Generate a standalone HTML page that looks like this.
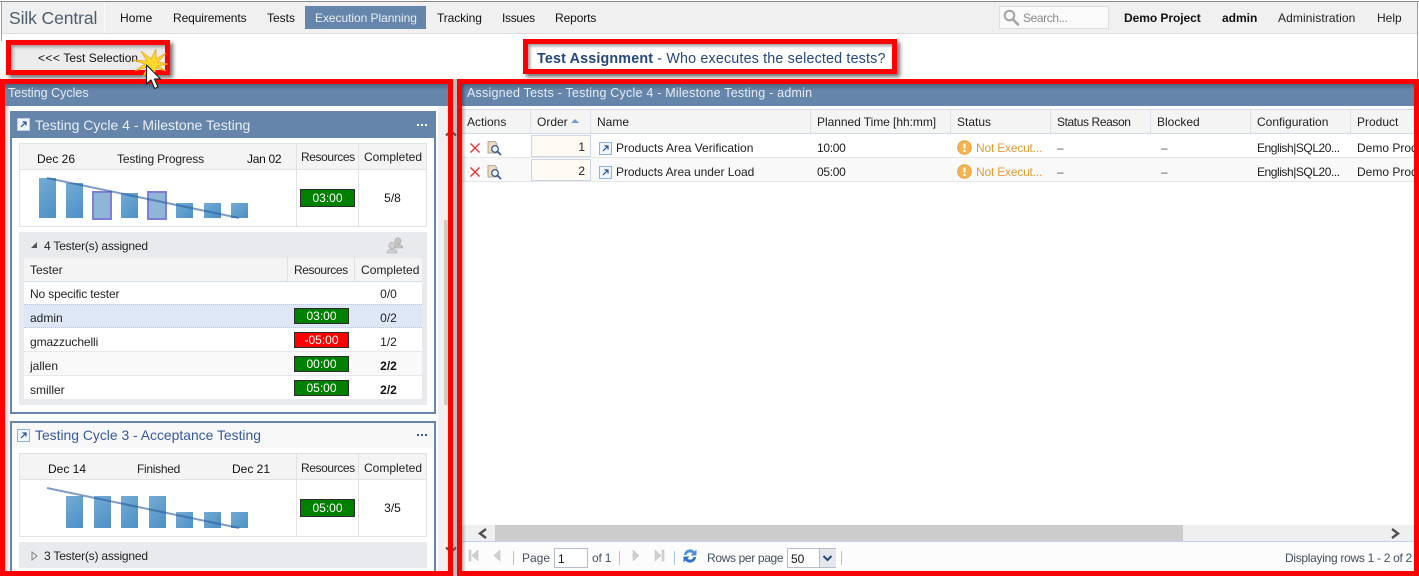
<!DOCTYPE html>
<html><head><meta charset="utf-8"><title>Silk Central</title>
<style>
html,body{margin:0;padding:0;background:#fff}
#p{position:relative;width:1419px;height:576px;overflow:hidden;background:#fff;font-family:"Liberation Sans",sans-serif;font-size:12px;color:#1e1e1e}
#p div,#p svg{position:absolute}
.t{white-space:nowrap;height:16px;line-height:16px;letter-spacing:0}
.c{text-align:center}
.r{position:absolute;box-sizing:border-box;border:5px solid #f00}
.bar{background:linear-gradient(135deg,#74abd5,#4b90c4)}
.pb{background:#8fb6d6;border:2px solid #7f7fd8;box-sizing:border-box}
.g{background:#008000;border:1px solid #2b2b2b;box-sizing:border-box;color:#fff;text-align:center;line-height:14px}
.red{background:#f00}
.l{height:1px}
</style></head><body><div id="p">

<!-- top bar -->
<div style="left:1px;top:1px;width:1416px;height:32px;background:#f0f0f0"></div>
<div style="left:0;top:1px;width:1419px;height:1px;background:#8a8a8a"></div>
<div style="left:1px;top:1px;width:1px;height:40px;background:#a0a0a0"></div>
<div style="left:1417px;top:1px;width:1px;height:78px;background:#a0a0a0"></div>
<div style="left:2px;top:33px;width:1415px;height:1px;background:#dcdcdc"></div>
<div style="left:104px;top:2px;width:1px;height:31px;background:#fafafa"></div>
<div class="t" style="left:9px;top:6px;font-size:17.500px;height:24px;line-height:24px;color:#4d5d6d;letter-spacing:-.1px">Silk Central</div>
<div class="t" style="left:120px;top:10px;color:#111;letter-spacing:.1px">Home</div>
<div class="t" style="left:173px;top:10px;color:#111;letter-spacing:-.1px">Requirements</div>
<div class="t" style="left:267px;top:10px;color:#111">Tests</div>
<div style="left:305px;top:6px;width:121px;height:23px;background:#6685aa"></div>
<div class="t" style="left:315px;top:10px;color:#e8eef5;letter-spacing:-.05px">Execution Planning</div>
<div class="t" style="left:437px;top:10px;color:#111;letter-spacing:-.1px">Tracking</div>
<div class="t" style="left:502px;top:10px;color:#111;letter-spacing:-.3px">Issues</div>
<div class="t" style="left:555px;top:10px;color:#111;letter-spacing:-.1px">Reports</div>
<div style="left:999px;top:6px;width:110px;height:23px;box-sizing:border-box;background:#fafafa;border:1px solid #dcdcdc"></div>
<svg style="left:1003px;top:9px" width="17" height="18" viewBox="0 0 17 18"><circle cx="6.5" cy="6.5" r="4.8" fill="none" stroke="#a4a4a4" stroke-width="2"/><path d="M10 10.500 L15 15.500" stroke="#a4a4a4" stroke-width="2.600" stroke-linecap="round"/></svg>
<div class="t" style="left:1023px;top:10px;color:#8a8a8a;letter-spacing:-.4px">Search...</div>
<div class="t" style="left:1124px;top:10px;font-weight:bold;color:#111;letter-spacing:-.05px">Demo Project</div>
<div class="t" style="left:1222px;top:10px;font-weight:bold;color:#111">admin</div>
<div class="t" style="left:1278px;top:10px;color:#222;letter-spacing:.1px">Administration</div>
<div class="t" style="left:1377px;top:10px;color:#222">Help</div>

<!-- test selection -->
<div style="left:11px;top:45px;width:154px;height:25px;background:#ececec;box-shadow:inset 2px 2px 3px #999"></div>
<div class="t" style="left:38px;top:50px;color:#111"><span style="letter-spacing:.4px">&lt;&lt;&lt;</span> Test Selection</div>
<div class="r" style="left:6px;top:40px;width:164px;height:35px;box-shadow:3px 3px 4px rgba(0,0,0,.55)"></div>

<!-- test assignment -->
<div class="t" style="left:537px;top:50px;font-size:14.300px;height:18px;line-height:18px;color:#24477f;letter-spacing:.17px"><b>Test Assignment</b> - Who executes the selected tests?</div>
<div class="r" style="left:523px;top:39px;width:374px;height:35px;box-shadow:3px 3px 4px rgba(0,0,0,.55),inset 2px 2px 3px rgba(0,0,0,.4)"></div>

<!-- left panel -->
<div style="left:5px;top:84px;width:443px;height:22px;background:linear-gradient(#4c6583,#6685aa 6px)"></div>
<div class="t" style="left:8px;top:85px;color:#e6ecf3;font-size:12.500px">Testing Cycles</div>
<div style="left:5px;top:106px;width:5px;height:465px;background:linear-gradient(90deg,#c8c8c8,#fff)"></div>
<div style="left:438px;top:106px;width:10px;height:465px;background:#f0f0f0"></div>
<div style="left:444px;top:220px;width:4px;height:185px;background:#ccc"></div>

<!-- cycle 4 -->
<div style="left:10px;top:111px;width:426px;height:303px;box-sizing:border-box;border:2px solid #6685aa;background:#fff"></div>
<div style="left:10px;top:111px;width:426px;height:27px;background:#6685aa"></div>
<svg style="left:17px;top:118px" width="13" height="13" viewBox="0 0 13 13"><rect x=".5" y=".5" width="12" height="12" fill="#f0f6fd" stroke="#b5cfe8"/><path d="M4 9 L9 4 M5.500 4 H9 V7.500" stroke="#23518f" stroke-width="1.200" fill="none"/></svg>
<div class="t" style="left:35px;top:116px;font-size:14px;height:18px;line-height:18px;color:#e8eef5">Testing Cycle 4 - Milestone Testing</div>
<svg style="left:417px;top:124px" width="11" height="3"><rect x="0" y="0" width="2" height="2" fill="#fff"/><rect x="4" y="0" width="2" height="2" fill="#fff"/><rect x="8" y="0" width="2" height="2" fill="#fff"/></svg>

<div style="left:19px;top:143px;width:408px;height:84px;box-sizing:border-box;border:1px solid #e2e2e2;background:#fff"></div>
<div style="left:20px;top:144px;width:406px;height:25px;background:#f4f4f4"></div>
<div class="l" style="left:20px;top:169px;width:406px;background:#e2e2e2"></div>
<div style="left:296px;top:144px;width:1px;height:82px;background:#e2e2e2"></div>
<div style="left:358px;top:144px;width:1px;height:82px;background:#e2e2e2"></div>
<div class="t" style="left:37px;top:151px;color:#111">Dec 26</div>
<div class="t" style="left:117px;top:151px;color:#222;letter-spacing:-.15px">Testing Progress</div>
<div class="t" style="left:247px;top:151px;color:#111;letter-spacing:-.3px">Jan 02</div>
<div class="t" style="left:301px;top:149px;color:#222;letter-spacing:-.4px">Resources</div>
<div class="t" style="left:364px;top:149px;color:#222">Completed</div>
<div class="bar" style="left:39px;top:178px;width:17px;height:40px"></div>
<div class="bar" style="left:66px;top:183px;width:17px;height:35px"></div>
<div class="pb" style="left:92px;top:191px;width:20px;height:29px"></div>
<div class="bar" style="left:121px;top:193px;width:17px;height:25px"></div>
<div class="pb" style="left:147px;top:191px;width:20px;height:29px"></div>
<div class="bar" style="left:176px;top:203px;width:17px;height:15px"></div>
<div class="bar" style="left:204px;top:203px;width:17px;height:15px"></div>
<div class="bar" style="left:231px;top:203px;width:17px;height:15px"></div>
<svg style="left:0;top:170px" width="260" height="60"><path d="M47 8 L239 48" stroke="#2c5a9c" stroke-opacity=".6" stroke-width="2"/></svg>
<div class="g" style="left:300px;top:189px;width:55px;height:18px;line-height:16px">03:00</div>
<div class="t c" style="left:359px;top:190px;width:67px;color:#111">5/8</div>

<div style="left:19px;top:232px;width:408px;height:173px;background:#e9eaee"></div>
<svg style="left:30px;top:241px" width="9" height="9"><path d="M1 7 H7 V1 Z" fill="#555"/></svg>
<div class="t" style="left:44px;top:238px;color:#222;letter-spacing:-.2px">4 Tester(s) assigned</div>
<svg style="left:386px;top:236px" width="18" height="18" viewBox="0 0 18 18"><g fill="#c4c4c4" stroke="#aaa" stroke-width=".6"><circle cx="12" cy="5" r="3.200"/><path d="M7 12 Q7 8.500 12 8.500 Q17 8.500 17 12 Z"/><circle cx="6" cy="9.500" r="3.200" fill="#d0d0d0"/><path d="M1 17 Q1 13 6 13 Q11 13 11 17 Z" fill="#d0d0d0"/></g></svg>
<div style="left:24px;top:258px;width:398px;height:141px;background:#fff"></div>
<div style="left:24px;top:258px;width:398px;height:23px;background:#f4f4f4"></div>
<div class="l" style="left:24px;top:281px;width:398px;background:#d3dceb"></div>
<div style="left:287px;top:258px;width:1px;height:23px;background:#e0e0e0"></div>
<div style="left:354px;top:258px;width:1px;height:23px;background:#e0e0e0"></div>
<div class="t" style="left:30px;top:262px;color:#222">Tester</div>
<div class="t" style="left:294px;top:262px;color:#222;letter-spacing:-.4px">Resources</div>
<div class="t" style="left:361px;top:262px;color:#222;letter-spacing:.05px">Completed</div>
<div style="left:24px;top:304px;width:398px;height:24px;box-sizing:border-box;background:#dde7f6;border-top:1px dotted #b8c8e4;border-bottom:1px dotted #b8c8e4"></div>
<div style="left:24px;top:352px;width:398px;height:24px;background:#f9f9f9"></div>
<div class="l" style="left:24px;top:351px;width:398px;background:#e8e8e8"></div>
<div class="l" style="left:24px;top:375px;width:398px;background:#e8e8e8"></div>
<div class="t" style="left:30px;top:286px;color:#222;letter-spacing:-.15px">No specific tester</div>
<div class="t" style="left:30px;top:310px;color:#222">admin</div>
<div class="t" style="left:30px;top:334px;color:#222;letter-spacing:-.1px">gmazzuchelli</div>
<div class="t" style="left:30px;top:358px;color:#222">jallen</div>
<div class="t" style="left:30px;top:382px;color:#222">smiller</div>
<div class="t c" style="left:355px;top:286px;width:67px;color:#222">0/0</div>
<div class="t c" style="left:355px;top:310px;width:67px;color:#222">0/2</div>
<div class="t c" style="left:355px;top:334px;width:67px;color:#222">1/2</div>
<div class="t c" style="left:355px;top:358px;width:67px;color:#111;font-weight:bold">2/2</div>
<div class="t c" style="left:355px;top:382px;width:67px;color:#111;font-weight:bold">2/2</div>
<div class="g" style="left:294px;top:308px;width:55px;height:16px">03:00</div>
<div class="g red" style="left:294px;top:332px;width:55px;height:16px">-05:00</div>
<div class="g" style="left:294px;top:356px;width:55px;height:16px">00:00</div>
<div class="g" style="left:294px;top:380px;width:55px;height:16px">05:00</div>

<!-- cycle 3 -->
<div style="left:10px;top:421px;width:426px;height:160px;box-sizing:border-box;border:2px solid #6685aa;background:#fff"></div>
<div style="left:12px;top:423px;width:422px;height:25px;background:#f8f8f8"></div>
<svg style="left:17px;top:429px" width="13" height="13" viewBox="0 0 13 13"><rect x=".5" y=".5" width="12" height="12" fill="#f0f6fd" stroke="#8db4dd"/><path d="M4 9 L9 4 M5.500 4 H9 V7.500" stroke="#23518f" stroke-width="1.200" fill="none"/></svg>
<div class="t" style="left:35px;top:426px;font-size:13.900px;height:18px;line-height:18px;color:#35599b">Testing Cycle 3 - Acceptance Testing</div>
<svg style="left:417px;top:434px" width="11" height="3"><rect x="0" y="0" width="2" height="2" fill="#35599b"/><rect x="4" y="0" width="2" height="2" fill="#35599b"/><rect x="8" y="0" width="2" height="2" fill="#35599b"/></svg>
<div style="left:19px;top:453px;width:408px;height:84px;box-sizing:border-box;border:1px solid #e2e2e2;background:#fff"></div>
<div style="left:20px;top:454px;width:406px;height:25px;background:#f4f4f4"></div>
<div class="l" style="left:20px;top:479px;width:406px;background:#e2e2e2"></div>
<div style="left:296px;top:454px;width:1px;height:82px;background:#e2e2e2"></div>
<div style="left:358px;top:454px;width:1px;height:82px;background:#e2e2e2"></div>
<div class="t" style="left:48px;top:461px;color:#111">Dec 14</div>
<div class="t" style="left:137px;top:461px;color:#222;letter-spacing:-.3px">Finished</div>
<div class="t" style="left:232px;top:461px;color:#111">Dec 21</div>
<div class="t" style="left:301px;top:460px;color:#222;letter-spacing:-.4px">Resources</div>
<div class="t" style="left:364px;top:460px;color:#222">Completed</div>
<div class="bar" style="left:66px;top:496px;width:17px;height:32px"></div>
<div class="bar" style="left:94px;top:496px;width:17px;height:32px"></div>
<div class="bar" style="left:121px;top:496px;width:17px;height:32px"></div>
<div class="bar" style="left:149px;top:496px;width:17px;height:32px"></div>
<div class="bar" style="left:176px;top:512px;width:17px;height:16px"></div>
<div class="bar" style="left:204px;top:512px;width:17px;height:16px"></div>
<div class="bar" style="left:231px;top:512px;width:17px;height:16px"></div>
<svg style="left:0;top:480px" width="260" height="60"><path d="M47 8 L239 48" stroke="#2c5a9c" stroke-opacity=".6" stroke-width="2"/></svg>
<div class="g" style="left:300px;top:499px;width:55px;height:18px;line-height:16px">05:00</div>
<div class="t c" style="left:359px;top:500px;width:67px;color:#111">3/5</div>
<div style="left:19px;top:542px;width:408px;height:26px;background:#e9eaee"></div>
<svg style="left:31px;top:551px" width="8" height="10"><path d="M1 1 L6 5 L1 9 Z" fill="none" stroke="#888"/></svg>
<div class="t" style="left:44px;top:548px;color:#222;letter-spacing:-.2px">3 Tester(s) assigned</div>

<!-- gap + scroll arrows -->
<div style="left:453px;top:79px;width:4px;height:497px;background:#bdbdbd"></div>
<svg style="left:445px;top:129px" width="12" height="8"><path d="M1 6.500 L6 2 L11 6.500" fill="none" stroke="#555" stroke-width="2.200"/></svg>
<svg style="left:445px;top:546px" width="12" height="8"><path d="M1 1.500 L6 6 L11 1.500" fill="none" stroke="#555" stroke-width="2.200"/></svg>

<!-- right panel -->
<div style="left:462px;top:84px;width:952px;height:22px;background:linear-gradient(#4c6583,#6685aa 6px)"></div>
<div class="t" style="left:467px;top:85px;color:#e6ecf3;font-size:12.500px;letter-spacing:.22px">Assigned Tests - Testing Cycle 4 - Milestone Testing - admin</div>
<div style="left:462px;top:109px;width:952px;height:25px;background:#f4f4f4;border-top:1px solid #d0daeb;border-bottom:1px solid #d0daeb;box-sizing:border-box"></div>
<div style="left:530px;top:110px;width:1px;height:23px;background:#dde1e8"></div>
<div style="left:590px;top:110px;width:1px;height:23px;background:#dde1e8"></div>
<div style="left:810px;top:110px;width:1px;height:23px;background:#dde1e8"></div>
<div style="left:950px;top:110px;width:1px;height:23px;background:#dde1e8"></div>
<div style="left:1050px;top:110px;width:1px;height:23px;background:#dde1e8"></div>
<div style="left:1150px;top:110px;width:1px;height:23px;background:#dde1e8"></div>
<div style="left:1250px;top:110px;width:1px;height:23px;background:#dde1e8"></div>
<div style="left:1350px;top:110px;width:1px;height:23px;background:#dde1e8"></div>
<div class="t" style="left:467px;top:114px;color:#222">Actions</div>
<div class="t" style="left:537px;top:114px;color:#222">Order</div>
<svg style="left:571px;top:118px" width="9" height="6"><path d="M0 5 L4 1 L8 5 Z" fill="#6d9ad2"/></svg>
<div class="t" style="left:597px;top:114px;color:#222">Name</div>
<div class="t" style="left:817px;top:114px;color:#222;letter-spacing:-.05px">Planned Time [hh:mm]</div>
<div class="t" style="left:957px;top:114px;color:#222">Status</div>
<div class="t" style="left:1057px;top:114px;color:#222;letter-spacing:-.4px">Status Reason</div>
<div class="t" style="left:1157px;top:114px;color:#222">Blocked</div>
<div class="t" style="left:1257px;top:114px;color:#222">Configuration</div>
<div class="t" style="left:1357px;top:114px;color:#222">Product</div>

<div style="left:462px;top:158px;width:952px;height:24px;background:#f9f9f9"></div>
<div class="l" style="left:462px;top:157px;width:952px;background:#e6e6e6"></div>
<div class="l" style="left:462px;top:181px;width:952px;background:#e6e6e6"></div>

<svg style="left:469px;top:142px" width="12" height="12"><path d="M1.500 1.500 L10.500 10.500 M10.500 1.500 L1.500 10.500" stroke="#e23a3a" stroke-width="1.500"/></svg>
<svg style="left:469px;top:166px" width="12" height="12"><path d="M1.500 1.500 L10.500 10.500 M10.500 1.500 L1.500 10.500" stroke="#e23a3a" stroke-width="1.500"/></svg>
<svg style="left:487px;top:141px" width="15" height="15" viewBox="0 0 15 15"><path d="M1 .5 H8 L10 3 V12 H1 Z" fill="#edd9c4" stroke="#a89682" stroke-width=".8"/><circle cx="8" cy="8" r="3.300" fill="#e8f2fb" stroke="#30517f" stroke-width="1.200"/><path d="M10.500 10.500 L14 14" stroke="#3050b0" stroke-width="1.600"/></svg>
<svg style="left:487px;top:165px" width="15" height="15" viewBox="0 0 15 15"><path d="M1 .5 H8 L10 3 V12 H1 Z" fill="#edd9c4" stroke="#a89682" stroke-width=".8"/><circle cx="8" cy="8" r="3.300" fill="#e8f2fb" stroke="#30517f" stroke-width="1.200"/><path d="M10.500 10.500 L14 14" stroke="#3050b0" stroke-width="1.600"/></svg>

<div style="left:531px;top:135px;width:60px;height:22px;box-sizing:border-box;background:#fdfaf3;border:1px solid #cdd6e6"></div>
<div style="left:531px;top:159px;width:60px;height:22px;box-sizing:border-box;background:#fdfaf3;border:1px solid #cdd6e6"></div>
<div class="t" style="left:531px;top:139px;width:54px;text-align:right;color:#222">1</div>
<div class="t" style="left:531px;top:163px;width:54px;text-align:right;color:#222">2</div>

<svg style="left:599px;top:142px" width="13" height="13" viewBox="0 0 13 13"><rect x=".5" y=".5" width="12" height="12" fill="#f0f6fd" stroke="#8db4dd"/><path d="M4 9 L9 4 M5.500 4 H9 V7.500" stroke="#23518f" stroke-width="1.200" fill="none"/></svg>
<svg style="left:599px;top:166px" width="13" height="13" viewBox="0 0 13 13"><rect x=".5" y=".5" width="12" height="12" fill="#f0f6fd" stroke="#8db4dd"/><path d="M4 9 L9 4 M5.500 4 H9 V7.500" stroke="#23518f" stroke-width="1.200" fill="none"/></svg>
<div class="t" style="left:616px;top:140px;color:#222">Products Area Verification</div>
<div class="t" style="left:616px;top:164px;color:#222;letter-spacing:-.05px">Products Area under Load</div>
<div class="t" style="left:817px;top:140px;color:#222;letter-spacing:-.3px">10:00</div>
<div class="t" style="left:817px;top:164px;color:#222;letter-spacing:-.3px">05:00</div>

<svg style="left:957px;top:140px" width="15" height="15"><circle cx="7.500" cy="7.500" r="6.800" fill="#f6b352" stroke="#e8a040"/><path d="M7.500 3.500 V8.500" stroke="#fff" stroke-width="2"/><circle cx="7.500" cy="11" r="1.200" fill="#fff"/></svg>
<svg style="left:957px;top:164px" width="15" height="15"><circle cx="7.500" cy="7.500" r="6.800" fill="#f6b352" stroke="#e8a040"/><path d="M7.500 3.500 V8.500" stroke="#fff" stroke-width="2"/><circle cx="7.500" cy="11" r="1.200" fill="#fff"/></svg>
<div class="t" style="left:976px;top:140px;color:#e39a35;letter-spacing:-.2px">Not Execut...</div>
<div class="t" style="left:976px;top:164px;color:#e39a35;letter-spacing:-.2px">Not Execut...</div>
<div class="t" style="left:1057px;top:140px;color:#555">–</div>
<div class="t" style="left:1057px;top:164px;color:#555">–</div>
<div class="t" style="left:1161px;top:140px;color:#555">–</div>
<div class="t" style="left:1161px;top:164px;color:#555">–</div>
<div class="t" style="left:1257px;top:140px;color:#222;letter-spacing:-.45px">English|SQL20...</div>
<div class="t" style="left:1257px;top:164px;color:#222;letter-spacing:-.45px">English|SQL20...</div>
<div class="t" style="left:1357px;top:140px;color:#222;width:57px;overflow:hidden">Demo Product</div>
<div class="t" style="left:1357px;top:164px;color:#222;width:57px;overflow:hidden">Demo Product</div>

<!-- h scrollbar -->
<div style="left:462px;top:525px;width:952px;height:16px;background:#efefef"></div>
<div style="left:495px;top:525px;width:688px;height:16px;background:#ccc"></div>
<svg style="left:477px;top:528px" width="12" height="11"><path d="M9 1 L3 5.500 L9 10" fill="none" stroke="#505050" stroke-width="2.400"/></svg>
<svg style="left:1389px;top:528px" width="12" height="11"><path d="M3 1 L9 5.500 L3 10" fill="none" stroke="#505050" stroke-width="2.400"/></svg>
<div class="l" style="left:462px;top:541px;width:952px;background:#c3d3ee"></div>
<div style="left:462px;top:542px;width:952px;height:29px;background:#fcfcfc"></div>

<!-- pager -->
<svg style="left:468px;top:549px" width="12" height="14"><rect x="1" y="1" width="2" height="11" fill="#d4d4d4" stroke="#bbb" stroke-width=".5"/><path d="M10 1 L4 6.500 L10 12 Z" fill="#d0d0d0" stroke="#bbb" stroke-width=".5"/></svg>
<svg style="left:493px;top:549px" width="9" height="14"><path d="M7 1 L1 6.500 L7 12 Z" fill="#d0d0d0" stroke="#bbb" stroke-width=".5"/></svg>
<div style="left:513px;top:551px;width:1px;height:14px;background:#a9c6e8"></div>
<div class="t" style="left:522px;top:550px;color:#44505e">Page</div>
<div style="left:554px;top:548px;width:34px;height:20px;box-sizing:border-box;background:#fff;border:1px solid #b5bccc"></div>
<div class="t" style="left:558px;top:551px;color:#111">1</div>
<div class="t" style="left:592px;top:550px;color:#44505e;letter-spacing:-.2px">of 1</div>
<div style="left:619px;top:551px;width:1px;height:14px;background:#a9c6e8"></div>
<svg style="left:631px;top:549px" width="9" height="14"><path d="M2 1 L8 6.500 L2 12 Z" fill="#d0d0d0" stroke="#bbb" stroke-width=".5"/></svg>
<svg style="left:653px;top:549px" width="12" height="14"><path d="M2 1 L8 6.500 L2 12 Z" fill="#d0d0d0" stroke="#bbb" stroke-width=".5"/><rect x="9" y="1" width="2" height="11" fill="#d4d4d4" stroke="#bbb" stroke-width=".5"/></svg>
<div style="left:674px;top:551px;width:1px;height:14px;background:#a9c6e8"></div>
<svg style="left:682px;top:548px" width="16" height="16" viewBox="0 0 16 16"><path d="M2 7 A6 6 0 0 1 12.500 3.500 L14.500 1.500 V7.500 H8.500 L10.500 5.500 A3.500 3.500 0 0 0 4.500 7 Z" fill="#4a90dc"/><path d="M14 9 A6 6 0 0 1 3.500 12.500 L1.500 14.500 V8.500 H7.500 L5.500 10.500 A3.500 3.500 0 0 0 11.500 9 Z" fill="#2f74c4"/></svg>
<div class="t" style="left:707px;top:550px;color:#44505e;letter-spacing:-.35px">Rows per page</div>
<div style="left:787px;top:548px;width:49px;height:20px;box-sizing:border-box;background:#fff;border:1px solid #b5bccc"></div>
<div style="left:819px;top:549px;width:16px;height:18px;background:#e4e8ee;border-left:1px solid #b5bccc"></div>
<svg style="left:822px;top:555px" width="11" height="7"><path d="M1.500 1 L5.500 5 L9.500 1" fill="none" stroke="#24477f" stroke-width="2"/></svg>
<div class="t" style="left:791px;top:551px;color:#111">50</div>
<div style="left:841px;top:551px;width:1px;height:14px;background:#a9c6e8"></div>
<div class="t" style="left:1285px;top:550px;color:#44505e;letter-spacing:-.3px">Displaying rows 1 - 2 of 2</div>

<!-- red frames -->
<div class="r" style="left:0;top:79px;width:453px;height:497px"></div>
<div class="r" style="left:457px;top:79px;width:962px;height:497px"></div>
<div style="left:462px;top:84px;width:4px;height:487px;background:linear-gradient(90deg,rgba(0,0,0,.3),rgba(0,0,0,0))"></div>

<!-- burst + cursor -->
<svg style="left:132px;top:48px" width="38" height="34" viewBox="0 0 38 34"><path d="M15 13 L9 3 L19 11 L24 1 L24 11 L34 5 L26 14 L36 16 L26 18 L34 23 L24 20 L22 27 L19 20 L11 29 L15 19 L3 23 L13 16 L1 12 Z" fill="#fbd92c" stroke="#eba91d" stroke-width=".8"/></svg>
<svg style="left:145px;top:64px" width="18" height="27" viewBox="0 0 18 27"><path d="M1.500 1 V20 L6 16 L9.500 24.500 L13 23 L9.500 15 L15.500 15 Z" fill="#fff" stroke="#222" stroke-width="1.200" stroke-linejoin="round"/></svg>

</div></body></html>
